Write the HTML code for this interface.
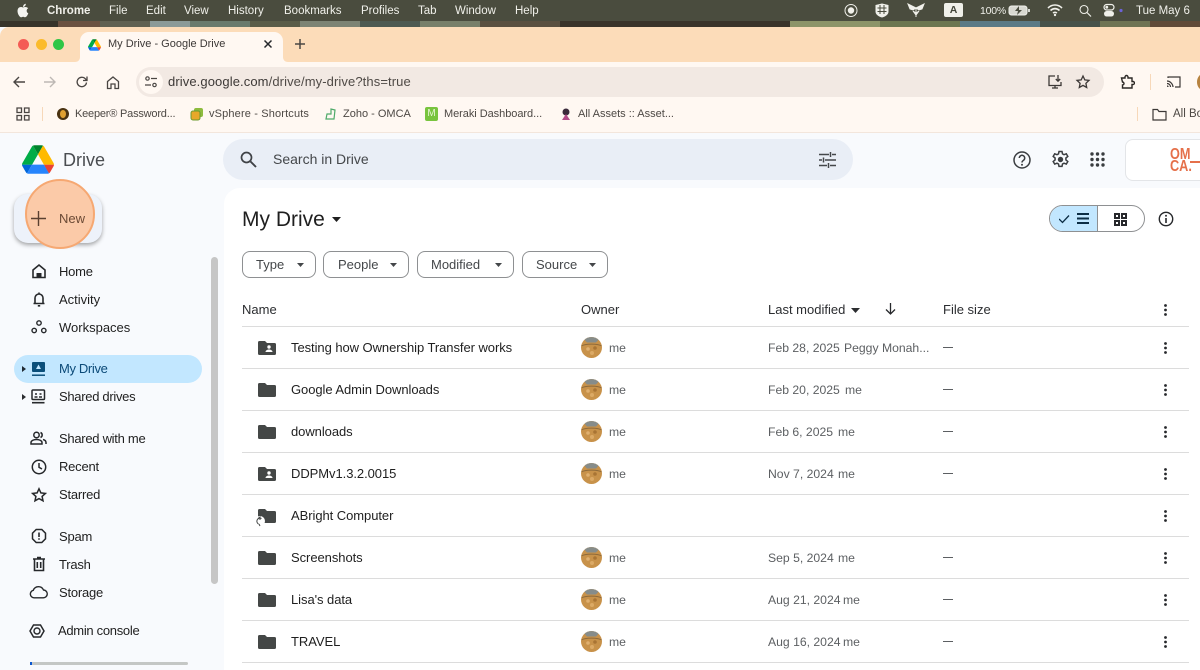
<!DOCTYPE html>
<html><head><meta charset="utf-8"><title>My Drive - Google Drive</title>
<style>
html,body{margin:0;padding:0;width:1200px;height:670px;overflow:hidden;background:#fff;font-family:"Liberation Sans",sans-serif}
#r{position:relative;width:1200px;height:670px;overflow:hidden;background:#f8fafd;filter:blur(.3px)}
#r div,#r svg{position:absolute}
.t{white-space:nowrap;line-height:16px;font-size:13px;color:#1f1f1f}
.m{color:#f0f0ea;font-size:11.5px;top:3px}
.b{color:#4d4844;font-size:11px;top:106px}
.n{color:#1f1f1f;font-size:13px;left:59px;letter-spacing:-.22px}
.g{color:#5c5f62;font-size:12.2px}
.r{letter-spacing:-.06px}
.l{left:242px;width:947px;height:1px;background:#dcdcdc}
.f{border:1px solid #8e9092;border-radius:8px;height:25px;top:251px;box-sizing:content-box;background:#fff}
svg{fill:none;stroke:#26282b;stroke-width:1.7}
</style></head><body><div id="r">
<!-- menu bar -->
<div style="left:0;top:0;width:1200px;height:21px;background:#4a4c3e"></div>
<div style="left:0;top:21px;width:1200px;height:6px;background:linear-gradient(90deg,#37342a 0 58px,#6b5140 58px 100px,#5f6152 100px 150px,#8a9a98 150px 190px,#6a7a6c 190px 250px,#5a5c48 250px 300px,#7d8474 300px 360px,#4d5a52 360px 420px,#78806a 420px 480px,#5a5040 480px 560px,#3a342a 560px 790px,#8d9468 790px 880px,#6c7650 880px 960px,#5b7a86 960px 1040px,#47524a 1040px 1100px,#6f7454 1100px 1150px,#614a38 1150px 1200px)"></div>
<svg style="left:16px;top:3px" width="14" height="16" viewBox="0 0 14 16"><path d="M7 4.500C5.500 3.600 3.600 3.800 2.500 5 1 6.800 1.300 10 3 12.600c1 1.500 2 2 3 1.500.8-.4 1.500-.4 2.300 0 1 .5 2-.1 3-1.700.5-.8.8-1.500 1-2.100-2-.9-2.300-3.900-.1-5.100C11 3.900 8.800 3.600 7 4.500z" fill="#f4f4f0" stroke="none"/><path d="M7 4c0-1.700 1.200-3 2.800-3.200C9.900 2.500 8.600 3.900 7 4z" fill="#f4f4f0" stroke="none"/></svg>
<div class="t m" style="left:47px;font-weight:bold;font-size:11.5px">Chrome</div>
<div class="t m" style="left:109px">File</div><div class="t m" style="left:146px">Edit</div><div class="t m" style="left:184px">View</div><div class="t m" style="left:228px">History</div><div class="t m" style="left:284px">Bookmarks</div><div class="t m" style="left:361px">Profiles</div><div class="t m" style="left:418px">Tab</div><div class="t m" style="left:455px">Window</div><div class="t m" style="left:515px">Help</div>
<svg style="left:844px;top:3px" width="14" height="15" viewBox="0 0 14 15"><circle cx="7" cy="7.500" r="6" stroke="#f0f0ea" stroke-width="1"/><circle cx="7" cy="7.500" r="3.200" fill="#f0f0ea" stroke="none"/></svg>
<svg style="left:875px;top:3px" width="14" height="15" viewBox="0 0 14 15"><path d="M7 .5l6.500 1.500v6.500c0 3-3 5-6.500 6-3.500-1-6.500-3-6.500-6V2z" fill="#f0f0ea" stroke="none"/><path d="M2.500 5h9M2.500 8.500h9M5 2v9M9 2v9" stroke="#4a4c3e" stroke-width="1"/></svg>
<svg style="left:906px;top:3px" width="20" height="15" viewBox="0 0 20 15"><path d="M10 5L2 1l2 5 3 1zM10 5l8-4-2 5-3 1zM10 5v9M7 8l3 2 3-2-3 4z" fill="#f0f0ea" stroke="#f0f0ea" stroke-width="1"/></svg>
<div style="left:944px;top:3px;width:19px;height:14px;background:#f0f0ea;border-radius:2px"></div>
<div class="t" style="left:944px;top:3px;width:19px;text-align:center;font-size:10.5px;font-weight:bold;line-height:15px;color:#44463a">A</div>
<div class="t m" style="left:980px;font-size:10.5px;top:3px;letter-spacing:-.2px">100%</div>
<svg style="left:1008px;top:4px" width="24" height="13" viewBox="0 0 24 13"><rect x="1" y="2" width="18" height="9" rx="2.500" fill="#d8d8d0" stroke="#f0f0ea" stroke-width="1"/><path d="M11 2l-4 5h3l-1 4 5-5h-3z" fill="#4a4c3e" stroke="none"/><path d="M21 5v3" stroke="#f0f0ea"/></svg>
<svg style="left:1047px;top:3px" width="16" height="14" viewBox="0 0 16 14"><path d="M1 5c4-4 10-4 14 0M3.500 7.500c3-2.500 6-2.500 9 0M6 10c1.500-1 2.500-1 4 0" stroke="#f0f0ea" stroke-width="1.600"/><circle cx="8" cy="12" r="1.200" fill="#f0f0ea" stroke="none"/></svg>
<svg style="left:1078px;top:3px" width="14" height="15" viewBox="0 0 14 15"><circle cx="6" cy="6.500" r="4" stroke="#f0f0ea" stroke-width="1.100"/><path d="M9 9.500l4 4" stroke="#f0f0ea" stroke-width="1.200"/></svg>
<svg style="left:1103px;top:3px" width="24" height="15" viewBox="0 0 24 15"><rect x="1" y="1.500" width="10" height="5.500" rx="2.700" stroke="#f0f0ea" stroke-width="1.200"/><rect x="1" y="8" width="10" height="5.500" rx="2.700" fill="#f0f0ea" stroke="none"/><circle cx="3.800" cy="4.200" r="1.400" fill="#f0f0ea" stroke="none"/><circle cx="18" cy="7.500" r="1.600" fill="#6c63d8" stroke="none"/></svg>
<div class="t m" style="left:1136px">Tue May 6</div>
<!-- browser chrome -->
<div style="left:0;top:27px;width:1200px;height:36px;background:#fcdcb9;border-radius:9px 0 0 0"></div>
<div style="left:0;top:62px;width:1200px;height:71px;background:#fff8f2"></div>
<div style="left:0;top:132px;width:1200px;height:1px;background:#f3e6dc"></div>
<div style="left:18px;top:39px;width:11px;height:11px;border-radius:50%;background:#f45c55"></div>
<div style="left:36px;top:39px;width:11px;height:11px;border-radius:50%;background:#fbbb2c"></div>
<div style="left:53px;top:39px;width:11px;height:11px;border-radius:50%;background:#2fc646"></div>
<div style="left:80px;top:32px;width:203px;height:40px;background:#fff8f2;border-radius:9px 9px 0 0"></div>
<svg style="left:75px;top:50px" width="5" height="12" viewBox="0 0 5 12"><path d="M0 12C3 12 5 10 5 7V12z" fill="#fff8f2" stroke="none"/></svg>
<svg style="left:283px;top:50px" width="5" height="12" viewBox="0 0 5 12"><path d="M5 12C2 12 0 10 0 7V12z" fill="#fff8f2" stroke="none"/></svg>
<svg style="left:88px;top:39px" width="13" height="12" viewBox="0 0 87.300 78"><path d="M6.600 66.850l3.850 6.650c.8 1.400 1.950 2.500 3.300 3.300L27.500 53H0c0 1.550.4 3.100 1.200 4.500z" fill="#0066da" stroke="none"/><path d="M43.650 25L29.900 1.200c-1.350.8-2.500 1.900-3.300 3.300L1.200 48.500C.4 49.900 0 51.450 0 53h27.500z" fill="#00ac47" stroke="none"/><path d="M73.550 76.800c1.350-.8 2.500-1.900 3.300-3.300l1.600-2.750L86.100 57.500c.8-1.400 1.200-2.950 1.200-4.500H59.800l5.850 11.500z" fill="#ea4335" stroke="none"/><path d="M43.650 25L57.400 1.200C56.050.4 54.500 0 52.900 0H34.400c-1.600 0-3.150.45-4.500 1.200z" fill="#00832d" stroke="none"/><path d="M59.800 53H27.500L13.750 76.800c1.350.8 2.900 1.200 4.500 1.200h50.800c1.600 0 3.150-.45 4.500-1.200z" fill="#2684fc" stroke="none"/><path d="M73.400 26.500L60.700 4.500c-.8-1.400-1.950-2.500-3.300-3.300L43.650 25 59.800 53h27.450c0-1.550-.4-3.100-1.200-4.500z" fill="#ffba00" stroke="none"/></svg>
<div class="t" style="left:108px;top:36px;font-size:11px;color:#3c3836">My Drive - Google Drive</div>
<svg style="left:263px;top:39px" width="10" height="10" viewBox="0 0 10 10"><path d="M1.500 1.500l7 7M8.500 1.500l-7 7" stroke-width="1.500"/></svg>
<svg style="left:294px;top:38px" width="12" height="12" viewBox="0 0 12 12"><path d="M6 1v10M1 6h10" stroke="#4a4643" stroke-width="1.500"/></svg>
<!-- toolbar -->
<svg style="left:12px;top:75px" width="14" height="14" viewBox="0 0 14 14"><path d="M13 7H2M7 2L2 7l5 5" stroke="#4a4643" stroke-width="1.400"/></svg>
<svg style="left:43px;top:75px" width="14" height="14" viewBox="0 0 14 14"><path d="M1 7h11M7 2l5 5-5 5" stroke="#bdb8b4" stroke-width="1.400"/></svg>
<svg style="left:75px;top:75px" width="14" height="14" viewBox="0 0 14 14"><path d="M11.500 7.500a4.700 4.700 0 1 1-1.300-3.800l1.800 1.800M12 1.500v4H8" stroke="#4a4643" stroke-width="1.300"/></svg>
<svg style="left:106px;top:75px" width="14" height="15" viewBox="0 0 14 15"><path d="M1.500 6.500L7 2l5.500 4.500V13.500H9V9H5v4.500H1.500z" stroke="#4a4643" stroke-width="1.300"/></svg>
<div style="left:136px;top:67px;width:968px;height:30px;background:#f2e9e3;border-radius:15px"></div>
<div style="left:139px;top:70px;width:24px;height:24px;background:#fff8f2;border-radius:50%"></div>
<svg style="left:144px;top:75px" width="14" height="14" viewBox="0 0 14 14"><circle cx="3.500" cy="3.500" r="1.700" stroke="#4a4643" stroke-width="1.200"/><circle cx="10.500" cy="10" r="1.700" stroke="#4a4643" stroke-width="1.200"/><path d="M7 3.500h6M1 10h6" stroke="#4a4643" stroke-width="1.300"/></svg>
<div class="t" style="left:168px;top:74px;font-size:13px;color:#3c3836;letter-spacing:.1px">drive.google.com<span style="color:#4f4a46">/drive/my-drive?ths=true</span></div>
<svg style="left:1047px;top:74px" width="16" height="16" viewBox="0 0 16 16"><path d="M8 2H2v9.500h12V8M5 14h6M8 11.500V14" stroke="#3c3836" stroke-width="1.300"/><path d="M11 1v6M8.800 5l2.200 2.200L13.200 5" stroke="#3c3836" stroke-width="1.300"/></svg>
<svg style="left:1075px;top:74px" width="16" height="16" viewBox="0 0 16 16"><path d="M8 2l1.800 3.900 4.200.5-3.100 2.900.8 4.200L8 11.400l-3.700 2.100.8-4.200L2 6.400l4.200-.5z" stroke="#3c3836" stroke-width="1.300"/></svg>
<svg style="left:1119px;top:74px" width="16" height="16" viewBox="0 0 16 16"><path d="M2.500 4H6V3a1.500 1.500 0 0 1 3 0v1h4v3.500h1a1.300 1.300 0 0 1 0 3h-1V14H3.500v-3a1.500 1.500 0 0 0 0-3z" stroke="#2b2825" stroke-width="1.400"/></svg>
<div style="left:1150px;top:74px;width:1px;height:16px;background:#f7d8b9"></div>
<svg style="left:1166px;top:75px" width="16" height="14" viewBox="0 0 16 14"><path d="M2 3V2h12v10H9M1 6c3 0 6 3 6 6M1 8.500c2 0 3.500 1.500 3.500 3.500M1 11c.6 0 1 .4 1 1" stroke="#3c3836" stroke-width="1.200"/></svg>
<div style="left:1197px;top:74px;width:12px;height:16px;border-radius:50%;background:#b7833f"></div>
<!-- bookmarks -->
<svg style="left:16px;top:107px" width="14" height="14" viewBox="0 0 14 14"><path d="M1 1h4.500v4.500H1zM8.500 1H13v4.500H8.500zM1 8.500h4.500V13H1zM8.500 8.500H13V13H8.500z" stroke="#4a4643" stroke-width="1.300"/></svg>
<div style="left:42px;top:107px;width:1px;height:14px;background:#f7d8b9"></div>
<div style="left:57px;top:108px;width:12px;height:12px;border-radius:50%;background:#4a3210"></div>
<div style="left:60px;top:110px;width:6px;height:8px;border-radius:50%;background:#e0a030"></div>
<div class="t b" style="left:75px;letter-spacing:-.2px">Keeper® Password...</div>
<svg style="left:190px;top:107px" width="14" height="14" viewBox="0 0 14 14"><rect x="4" y="1" width="9" height="9" rx="2" fill="#8dbb3e" stroke="none"/><rect x="1" y="4" width="9" height="9" rx="2" fill="#e7a82a" stroke="#6b9a2d" stroke-width="1"/></svg>
<div class="t b" style="left:209px;letter-spacing:.15px">vSphere - Shortcuts</div>
<svg style="left:324px;top:107px" width="14" height="14" viewBox="0 0 14 14"><path d="M2 12l1-5 4 0 0-5 4 1-1 9z" stroke="#4faa6a" stroke-width="1.200"/></svg>
<div class="t b" style="left:343px">Zoho - OMCA</div>
<div style="left:425px;top:107px;width:13px;height:14px;border-radius:2px;background:#78c43e"></div>
<div class="t" style="left:425px;top:107px;width:13px;text-align:center;font-size:10px;line-height:14px;color:#e6f5d4">M</div>
<div class="t b" style="left:444px;letter-spacing:-.05px">Meraki Dashboard...</div>
<svg style="left:559px;top:107px" width="14" height="14" viewBox="0 0 14 14"><circle cx="7" cy="5" r="3.500" fill="#3a2a3a" stroke="none"/><path d="M3 13l4-6 4 6z" fill="#b34a88" stroke="none"/></svg>
<div class="t b" style="left:578px">All Assets :: Asset...</div>
<div style="left:1137px;top:107px;width:1px;height:14px;background:#f7d8b9"></div>
<svg style="left:1152px;top:108px" width="15" height="13" viewBox="0 0 15 13"><path d="M1 1.500h4.500L7 3.500h7V12H1z" stroke="#3c3836" stroke-width="1.200"/></svg>
<div class="t b" style="left:1173px;font-size:11.5px">All Bo</div>
<!-- drive header -->
<svg style="left:22px;top:145px" width="32" height="29" viewBox="0 0 87.300 78"><path d="M6.600 66.850l3.850 6.650c.8 1.400 1.950 2.500 3.300 3.300L27.500 53H0c0 1.550.4 3.100 1.200 4.500z" fill="#0066da" stroke="none"/><path d="M43.650 25L29.900 1.200c-1.350.8-2.500 1.900-3.300 3.300L1.200 48.500C.4 49.900 0 51.450 0 53h27.500z" fill="#00ac47" stroke="none"/><path d="M73.550 76.800c1.350-.8 2.500-1.900 3.300-3.300l1.600-2.750L86.100 57.500c.8-1.400 1.200-2.950 1.200-4.500H59.800l5.850 11.500z" fill="#ea4335" stroke="none"/><path d="M43.650 25L57.400 1.200C56.050.4 54.500 0 52.900 0H34.400c-1.600 0-3.150.45-4.500 1.200z" fill="#00832d" stroke="none"/><path d="M59.800 53H27.500L13.750 76.800c1.350.8 2.900 1.200 4.500 1.200h50.800c1.600 0 3.150-.45 4.500-1.200z" fill="#2684fc" stroke="none"/><path d="M73.400 26.500L60.700 4.500c-.8-1.400-1.950-2.500-3.300-3.300L43.650 25 59.800 53h27.450c0-1.550-.4-3.100-1.200-4.500z" fill="#ffba00" stroke="none"/></svg>
<div class="t" style="left:63px;top:150px;font-size:18px;line-height:20px;color:#4a4d51">Drive</div>
<div style="left:223px;top:139px;width:630px;height:41px;background:#e9eef6;border-radius:21px"></div>
<svg style="left:240px;top:151px" width="17" height="17" viewBox="0 0 17 17"><circle cx="6.500" cy="6.500" r="5" stroke="#3f4246" stroke-width="1.700"/><path d="M10.500 10.500L16 16" stroke="#3f4246" stroke-width="1.900"/></svg>
<div class="t" style="left:273px;top:151px;font-size:14px;color:#44474a">Search in Drive</div>
<svg style="left:819px;top:152px" width="17" height="16" viewBox="0 0 17 16"><path d="M0 2.500h10M13 2.500h4M11.500 0v5M0 8h3M6 8h11M4.500 5.500v5M0 13.500h8M11 13.500h6M9.500 11v5" stroke="#44474a" stroke-width="1.500"/></svg>
<svg style="left:1013px;top:151px" width="18" height="18" viewBox="0 0 18 18"><circle cx="9" cy="9" r="8" stroke="#3a3d40" stroke-width="1.500"/><path d="M6.300 7a2.700 2.700 0 1 1 4.300 2.200C9.500 10 9 10.500 9 11.500" stroke="#3a3d40" stroke-width="1.500"/><circle cx="9" cy="13.700" r="1" fill="#3a3d40" stroke="none"/></svg>
<svg style="left:1051px;top:150px" width="19" height="19" viewBox="0 0 19 19"><path d="M8 1.500h3l.5 2.400 1.500.8 2.300-.9 1.500 2.600-1.900 1.600v1.900l1.900 1.600-1.500 2.600-2.300-.9-1.500.8-.5 2.400H8l-.5-2.400-1.500-.8-2.300.9-1.500-2.600 1.900-1.600V8L2.200 6.400l1.500-2.600 2.300.9 1.500-.8z" stroke="#3a3d40" stroke-width="1.500"/><circle cx="9.500" cy="9.500" r="2.700" fill="#3a3d40" stroke="none"/></svg>
<svg style="left:1090px;top:152px" width="15" height="15" viewBox="0 0 15 15"><g fill="#3a3d40" stroke="none"><circle cx="2" cy="2" r="1.700"/><circle cx="7.500" cy="2" r="1.700"/><circle cx="13" cy="2" r="1.700"/><circle cx="2" cy="7.500" r="1.700"/><circle cx="7.500" cy="7.500" r="1.700"/><circle cx="13" cy="7.500" r="1.700"/><circle cx="2" cy="13" r="1.700"/><circle cx="7.500" cy="13" r="1.700"/><circle cx="13" cy="13" r="1.700"/></g></svg>
<div style="left:1125px;top:139px;width:90px;height:40px;background:#fff;border:1px solid #e3e5e8;border-radius:8px"></div>
<div class="t" style="left:1170px;top:149px;font-size:15.500px;line-height:12px;font-weight:bold;color:#e5704a;transform:scaleX(.82);transform-origin:0 0">OM<br>CA.</div>
<div style="left:1190px;top:161px;width:12px;height:2px;background:#e5704a"></div>
<!-- content panel -->
<div style="left:224px;top:188px;width:976px;height:482px;background:#fff;border-radius:16px 0 0 0"></div>
<!-- sidebar -->
<div style="left:14px;top:194px;width:88px;height:49px;background:#edf2fa;border-radius:14px;box-shadow:0 2px 4px rgba(0,0,0,.35)"></div>
<div style="left:25px;top:179px;width:70px;height:70px;box-sizing:border-box;border-radius:50%;background:#fbcaa8;border:2px solid #f6a872"></div>
<svg style="left:31px;top:211px" width="15" height="15" viewBox="0 0 15 15"><path d="M7.500 0v15M0 7.500h15" stroke="#5a4030" stroke-width="1.400"/></svg>
<div class="t" style="left:59px;top:211px;font-size:13px;color:#6b4a35">New</div>
<svg style="left:31px;top:263px" width="16" height="16" viewBox="0 0 16 16"><path d="M2 7l6-5 6 5v7.500H2z" stroke-width="1.600"/><path d="M5.500 14.500V10h5v4.500z" fill="#26282b" stroke="none"/></svg>
<div class="t n" style="top:264px">Home</div>
<svg style="left:31px;top:291px" width="16" height="16" viewBox="0 0 16 16"><path d="M2.500 12.500h11M4 12.500V7a4 4 0 0 1 8 0v5.500M8 1.500v1.500M6.800 14.800h2.400" stroke-width="1.600"/></svg>
<div class="t n" style="top:292px;letter-spacing:0">Activity</div>
<svg style="left:31px;top:319px" width="16" height="16" viewBox="0 0 16 16"><circle cx="8" cy="4" r="2.200" stroke-width="1.400"/><circle cx="3.200" cy="11.500" r="2.200" stroke-width="1.400"/><circle cx="12.800" cy="11.500" r="2.200" stroke-width="1.400"/></svg>
<div class="t n" style="top:320px;letter-spacing:0">Workspaces</div>
<div style="left:14px;top:355px;width:188px;height:28px;background:#c2e7ff;border-radius:14px"></div>
<svg style="left:22px;top:366px" width="4" height="6" viewBox="0 0 4 6"><path d="M0 0l4 3-4 3z" fill="#1f2a33" stroke="none"/></svg>
<svg style="left:31px;top:361px" width="15" height="16" viewBox="0 0 15 16"><rect x="1" y="1" width="13" height="10" rx="1" fill="#0b4f7a" stroke="none"/><path d="M1 14.200h13" stroke="#0b4f7a" stroke-width="1.500"/><path d="M7.500 3.500l2.500 4.500H5z" fill="#c2e7ff" stroke="none"/></svg>
<div class="t n" style="top:361px;color:#0b4a78;letter-spacing:-.35px">My Drive</div>
<svg style="left:22px;top:394px" width="4" height="6" viewBox="0 0 4 6"><path d="M0 0l4 3-4 3z" fill="#2b2d30" stroke="none"/></svg>
<svg style="left:31px;top:389px" width="15" height="15" viewBox="0 0 15 15"><rect x="1" y="1" width="12.500" height="9.500" rx="1" stroke-width="1.500"/><path d="M1 13.700h12.500" stroke-width="1.600"/><path d="M4 5h2M8.500 5h2M3.500 8h3M8 8h3" stroke-width="1.400"/></svg>
<div class="t n" style="top:389px;letter-spacing:-.3px">Shared drives</div>
<svg style="left:30px;top:431px" width="17" height="15" viewBox="0 0 17 15"><circle cx="6.500" cy="4" r="2.700" stroke-width="1.500"/><path d="M1 13v-1.500c0-2 3-3 5.500-3s5.500 1 5.500 3V13z" stroke-width="1.500"/><path d="M10.500 1.500a2.700 2.700 0 0 1 0 5M13 8.500c1.800.5 3 1.500 3 3V13" stroke-width="1.500"/></svg>
<div class="t n" style="top:431px;letter-spacing:-.28px">Shared with me</div>
<svg style="left:31px;top:459px" width="16" height="16" viewBox="0 0 16 16"><circle cx="8" cy="8" r="6.700" stroke-width="1.500"/><path d="M8 4v4.300l3 1.700" stroke-width="1.500"/></svg>
<div class="t n" style="top:459px">Recent</div>
<svg style="left:31px;top:487px" width="16" height="16" viewBox="0 0 16 16"><path d="M8 1.800l1.900 4.100 4.500.5-3.300 3 .9 4.400L8 11.600l-4 2.200.9-4.400-3.300-3 4.500-.5z" stroke-width="1.500"/></svg>
<div class="t n" style="top:487px">Starred</div>
<svg style="left:31px;top:528px" width="16" height="16" viewBox="0 0 16 16"><path d="M5.200 1.500h5.600l3.700 3.700v5.600l-3.700 3.700H5.200l-3.700-3.700V5.200z" stroke-width="1.500"/><path d="M8 4.500v4.500" stroke-width="1.600"/><circle cx="8" cy="11" r=".9" fill="#26282b" stroke="none"/></svg>
<div class="t n" style="top:529px">Spam</div>
<svg style="left:31px;top:556px" width="16" height="16" viewBox="0 0 16 16"><path d="M2 3h12M6 1.500h4M3.500 3v11.500h9V3M6.300 6v6M9.700 6v6" stroke-width="1.600"/></svg>
<div class="t n" style="top:557px">Trash</div>
<svg style="left:29px;top:585px" width="19" height="14" viewBox="0 0 19 14"><path d="M5 12.800a3.800 3.800 0 0 1-.7-7.500A5.500 5.500 0 0 1 14.500 5a3.900 3.900 0 0 1-.3 7.800z" stroke-width="1.400"/></svg>
<div class="t n" style="top:585px">Storage</div>
<svg style="left:29px;top:623px" width="16" height="16" viewBox="0 0 16 16"><path d="M4.500 2h7L15 8l-3.500 6h-7L1 8z" stroke-width="1.500"/><circle cx="8" cy="8" r="3" stroke-width="1.400"/></svg>
<div class="t n" style="left:58px;top:623px;letter-spacing:-.3px">Admin console</div>
<div style="left:30px;top:662px;width:158px;height:3px;background:#c4c7c5;border-radius:2px"></div>
<div style="left:30px;top:662px;width:2px;height:3px;background:#0b57d0"></div>
<div style="left:211px;top:257px;width:7px;height:327px;background:#c6c6c6;border-radius:4px"></div>
<!-- main -->
<div class="t" style="left:242px;top:208px;font-size:21px;line-height:24px;color:#1f1f1f">My Drive</div>
<svg style="left:332px;top:217px" width="9" height="5" viewBox="0 0 9 5"><path d="M0 0h9L4.500 5z" fill="#1f1f1f" stroke="none"/></svg>
<div style="left:1049px;top:205px;width:94px;height:25px;border:1px solid #8e9092;border-radius:14px;background:#fff"></div>
<div style="left:1050px;top:206px;width:47px;height:25px;background:#c2e7ff;border-radius:13px 0 0 13px;border-right:1px solid #8e9092"></div>
<svg style="left:1059px;top:213px" width="30" height="11" viewBox="0 0 30 11"><path d="M0 6l3.500 3.500L10 2.500" stroke="#0b2d44" stroke-width="1.300"/><path d="M18 1h12M18 5.500h12M18 10h12" stroke="#0b2d44" stroke-width="2"/></svg>
<svg style="left:1114px;top:213px" width="13" height="13" viewBox="0 0 13 13"><path d="M1 1h4v4H1zM8 1h4v4H8zM1 8h4v4H1zM8 8h4v4H8z" stroke-width="2"/></svg>
<svg style="left:1158px;top:211px" width="16" height="16" viewBox="0 0 16 16"><circle cx="8" cy="8" r="6.700" stroke-width="1.400"/><path d="M8 7v5" stroke-width="1.600"/><circle cx="8" cy="4.700" r="1" fill="#2b2d30" stroke="none"/></svg>
<div class="f" style="left:242px;width:72px"></div><div class="f" style="left:323px;width:84px"></div><div class="f" style="left:417px;width:95px"></div><div class="f" style="left:522px;width:84px"></div>
<div class="t" style="left:256px;top:257px;color:#44474a">Type</div><div class="t" style="left:338px;top:257px;color:#44474a">People</div><div class="t" style="left:431px;top:257px;color:#44474a">Modified</div><div class="t" style="left:536px;top:257px;color:#44474a">Source</div>
<svg style="left:297px;top:263px" width="7" height="4" viewBox="0 0 7 4"><path d="M0 0h7L3.500 4z" fill="#44474a" stroke="none"/></svg>
<svg style="left:390px;top:263px" width="7" height="4" viewBox="0 0 7 4"><path d="M0 0h7L3.500 4z" fill="#44474a" stroke="none"/></svg>
<svg style="left:495px;top:263px" width="7" height="4" viewBox="0 0 7 4"><path d="M0 0h7L3.500 4z" fill="#44474a" stroke="none"/></svg>
<svg style="left:589px;top:263px" width="7" height="4" viewBox="0 0 7 4"><path d="M0 0h7L3.500 4z" fill="#44474a" stroke="none"/></svg>
<div class="t" style="left:242px;top:302px;color:#2b2d30">Name</div><div class="t" style="left:581px;top:302px;color:#2b2d30">Owner</div><div class="t" style="left:768px;top:302px;color:#2b2d30">Last modified</div><div class="t" style="left:943px;top:302px;color:#2b2d30">File size</div>
<svg style="left:851px;top:308px" width="9" height="5" viewBox="0 0 9 5"><path d="M0 0h9L4.500 5z" fill="#2b2d30" stroke="none"/></svg>
<svg style="left:885px;top:303px" width="11" height="12" viewBox="0 0 11 12"><path d="M5.500 0v11M1 6.500L5.500 11 10 6.500" stroke-width="1.300"/></svg>
<div class="l" style="top:326px"></div><div class="l" style="top:368px"></div><div class="l" style="top:410px"></div><div class="l" style="top:452px"></div><div class="l" style="top:494px"></div><div class="l" style="top:536px"></div><div class="l" style="top:578px"></div><div class="l" style="top:620px"></div><div class="l" style="top:662px"></div>
<svg width="0" height="0" style="left:0;top:0"><defs>
<symbol id="k" viewBox="0 0 3 12"><circle cx="1.500" cy="1.500" r="1.400" fill="#26282b" stroke="none"/><circle cx="1.500" cy="6" r="1.400" fill="#26282b" stroke="none"/><circle cx="1.500" cy="10.500" r="1.400" fill="#26282b" stroke="none"/></symbol>
<symbol id="d" viewBox="0 0 18 14"><path d="M1.500 0H7l2 2h7.500A1.500 1.500 0 0 1 18 3.500v9a1.500 1.500 0 0 1-1.500 1.500h-15A1.500 1.500 0 0 1 0 12.500v-11A1.500 1.500 0 0 1 1.500 0z" fill="#444746" stroke="none"/></symbol>
<symbol id="s" viewBox="0 0 18 14"><path d="M1.500 0H7l2 2h7.500A1.500 1.500 0 0 1 18 3.500v9a1.500 1.500 0 0 1-1.500 1.500h-15A1.500 1.500 0 0 1 0 12.500v-11A1.500 1.500 0 0 1 1.500 0z" fill="#444746" stroke="none"/><circle cx="11" cy="6" r="1.700" fill="#fff" stroke="none"/><path d="M7.500 11c0-1.700 2-2.500 3.500-2.500s3.500.8 3.500 2.500z" fill="#fff" stroke="none"/></symbol>
<symbol id="a" viewBox="0 0 21 21"><circle cx="10.500" cy="10.500" r="10.500" fill="#c8924a" stroke="none"/><path d="M3.500 2.800a10.500 10.500 0 0 1 14 0L15 5.500H6z" fill="#868c8a" stroke="none"/><path d="M0.500 9C4 6.500 17 6.500 20.500 9" stroke="#8e6a3a" stroke-width="1"/><circle cx="7" cy="12" r="1.800" fill="#e0b070" stroke="none"/><circle cx="14" cy="11" r="1.800" fill="#a87434" stroke="none"/><circle cx="11" cy="16" r="2" fill="#dcaa66" stroke="none"/></symbol>
</defs></svg>
<svg style="left:258px;top:341px" width="18" height="14"><use href="#s"/></svg>
<svg style="left:258px;top:383px" width="18" height="14"><use href="#d"/></svg>
<svg style="left:258px;top:425px" width="18" height="14"><use href="#d"/></svg>
<svg style="left:258px;top:467px" width="18" height="14"><use href="#s"/></svg>
<svg style="left:258px;top:509px" width="18" height="14"><use href="#d"/></svg>
<svg style="left:255px;top:514px" width="11" height="13" viewBox="0 0 11 13"><circle cx="5" cy="7" r="5" fill="#fff" stroke="none"/><path d="M6.500 4.500A3 3 0 0 0 3.500 10M3 4.500l2-1.500v3M5 12l-1-2" stroke="#444746" stroke-width="1"/></svg>
<svg style="left:258px;top:551px" width="18" height="14"><use href="#d"/></svg>
<svg style="left:258px;top:593px" width="18" height="14"><use href="#d"/></svg>
<svg style="left:258px;top:635px" width="18" height="14"><use href="#d"/></svg>
<div class="t r" style="left:291px;top:340px">Testing how Ownership Transfer works</div>
<div class="t r" style="left:291px;top:382px">Google Admin Downloads</div>
<div class="t r" style="left:291px;top:424px">downloads</div>
<div class="t r" style="left:291px;top:466px">DDPMv1.3.2.0015</div>
<div class="t r" style="left:291px;top:508px">ABright Computer</div>
<div class="t r" style="left:291px;top:550px">Screenshots</div>
<div class="t r" style="left:291px;top:592px">Lisa's data</div>
<div class="t r" style="left:291px;top:634px">TRAVEL</div>
<svg style="left:581px;top:337px" width="21" height="21"><use href="#a"/></svg>
<svg style="left:581px;top:379px" width="21" height="21"><use href="#a"/></svg>
<svg style="left:581px;top:421px" width="21" height="21"><use href="#a"/></svg>
<svg style="left:581px;top:463px" width="21" height="21"><use href="#a"/></svg>
<svg style="left:581px;top:547px" width="21" height="21"><use href="#a"/></svg>
<svg style="left:581px;top:589px" width="21" height="21"><use href="#a"/></svg>
<svg style="left:581px;top:631px" width="21" height="21"><use href="#a"/></svg>
<div class="t g" style="left:609px;top:340px">me</div><div class="t g" style="left:609px;top:382px">me</div><div class="t g" style="left:609px;top:424px">me</div><div class="t g" style="left:609px;top:466px">me</div><div class="t g" style="left:609px;top:550px">me</div><div class="t g" style="left:609px;top:592px">me</div><div class="t g" style="left:609px;top:634px">me</div>
<div class="t g" style="left:768px;top:340px">Feb 28, 2025</div><div class="t g" style="left:844px;top:340px">Peggy Monah...</div>
<div class="t g" style="left:768px;top:382px">Feb 20, 2025</div><div class="t g" style="left:845px;top:382px">me</div>
<div class="t g" style="left:768px;top:424px">Feb 6, 2025</div><div class="t g" style="left:838px;top:424px">me</div>
<div class="t g" style="left:768px;top:466px">Nov 7, 2024</div><div class="t g" style="left:838px;top:466px">me</div>
<div class="t g" style="left:768px;top:550px">Sep 5, 2024</div><div class="t g" style="left:838px;top:550px">me</div>
<div class="t g" style="left:768px;top:592px">Aug 21, 2024</div><div class="t g" style="left:843px;top:592px">me</div>
<div class="t g" style="left:768px;top:634px">Aug 16, 2024</div><div class="t g" style="left:843px;top:634px">me</div>
<div style="left:943px;top:347px;width:10px;height:1px;background:#5c5f62"></div><div style="left:943px;top:389px;width:10px;height:1px;background:#5c5f62"></div><div style="left:943px;top:431px;width:10px;height:1px;background:#5c5f62"></div><div style="left:943px;top:473px;width:10px;height:1px;background:#5c5f62"></div><div style="left:943px;top:557px;width:10px;height:1px;background:#5c5f62"></div><div style="left:943px;top:599px;width:10px;height:1px;background:#5c5f62"></div><div style="left:943px;top:641px;width:10px;height:1px;background:#5c5f62"></div>
<svg style="left:1164px;top:304px" width="3" height="12"><use href="#k"/></svg>
<svg style="left:1164px;top:342px" width="3" height="12"><use href="#k"/></svg>
<svg style="left:1164px;top:384px" width="3" height="12"><use href="#k"/></svg>
<svg style="left:1164px;top:426px" width="3" height="12"><use href="#k"/></svg>
<svg style="left:1164px;top:468px" width="3" height="12"><use href="#k"/></svg>
<svg style="left:1164px;top:510px" width="3" height="12"><use href="#k"/></svg>
<svg style="left:1164px;top:552px" width="3" height="12"><use href="#k"/></svg>
<svg style="left:1164px;top:594px" width="3" height="12"><use href="#k"/></svg>
<svg style="left:1164px;top:636px" width="3" height="12"><use href="#k"/></svg>
</div></body></html>
